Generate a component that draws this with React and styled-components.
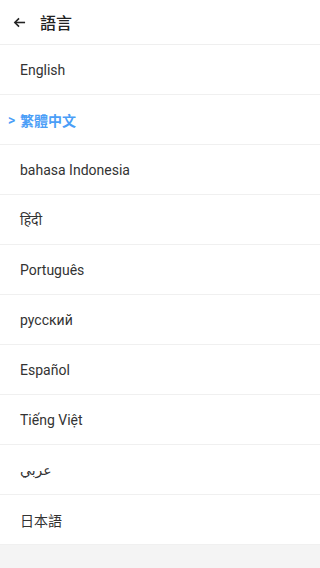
import styled, { createGlobalStyle } from "styled-components";

const GlobalStyle = createGlobalStyle`
  html, body {
    margin: 0;
    padding: 0;
    background: #f4f4f4;
  }
  body {
    font-family: Roboto, "Noto Sans", "Noto Sans CJK TC", sans-serif;
    -webkit-font-smoothing: antialiased;
  }
`;

const Page = styled.div`
  width: 320px;
  min-height: 568px;
  background: #f4f4f4;
`;

const Header = styled.div`
  height: 44px;
  display: flex;
  align-items: center;
  background: #fff;
  border-bottom: 1px solid #efefef;
  padding-left: 13px;
  gap: 14px;
  color: #222;
`;

const BackIcon = styled.svg`
  width: 13px;
  height: 13px;
  flex-shrink: 0;
`;

const Title = styled.div`
  font-size: 16px;
  font-weight: 500;
  font-family: "Noto Sans CJK TC", sans-serif;
  color: #222;
`;

const List = styled.div`
  background: #fff;
`;

const Row = styled.div`
  height: 49px;
  display: flex;
  align-items: center;
  border-bottom: 1px solid #f0f0f0;
  padding-left: ${(p) => (p.$active ? "8px" : "20px")};
  font-size: 14px;
  font-weight: ${(p) => (p.$active ? 600 : 400)};
  color: ${(p) => (p.$active ? "#4b9ef7" : "#333")};
  font-family: Roboto, "Noto Sans", "Noto Sans CJK TC", "DejaVu Sans", sans-serif;
`;

const Marker = styled.span`
  display: inline-block;
  width: 12px;
`;

const languages = [
  "English",
  "繁體中文",
  "bahasa Indonesia",
  "हिंदी",
  "Português",
  "русский",
  "Español",
  "Tiếng Việt",
  "عربي",
  "日本語",
];

const App = () => {
  return (
    <Page>
      <GlobalStyle />
      <Header>
        <BackIcon viewBox="0 0 14 14" fill="none" stroke="#222" strokeWidth="1.7">
          <path d="M13 7H2" />
          <path d="M6.5 2.5L2 7l4.5 4.5" />
        </BackIcon>
        <Title>語言</Title>
      </Header>
      <List>
        {languages.map((lang) => (
          <Row key={lang} $active={lang === "繁體中文"}>
            {lang === "繁體中文" && <Marker>&gt;</Marker>}
            {lang}
          </Row>
        ))}
      </List>
    </Page>
  );
};

export default App;
